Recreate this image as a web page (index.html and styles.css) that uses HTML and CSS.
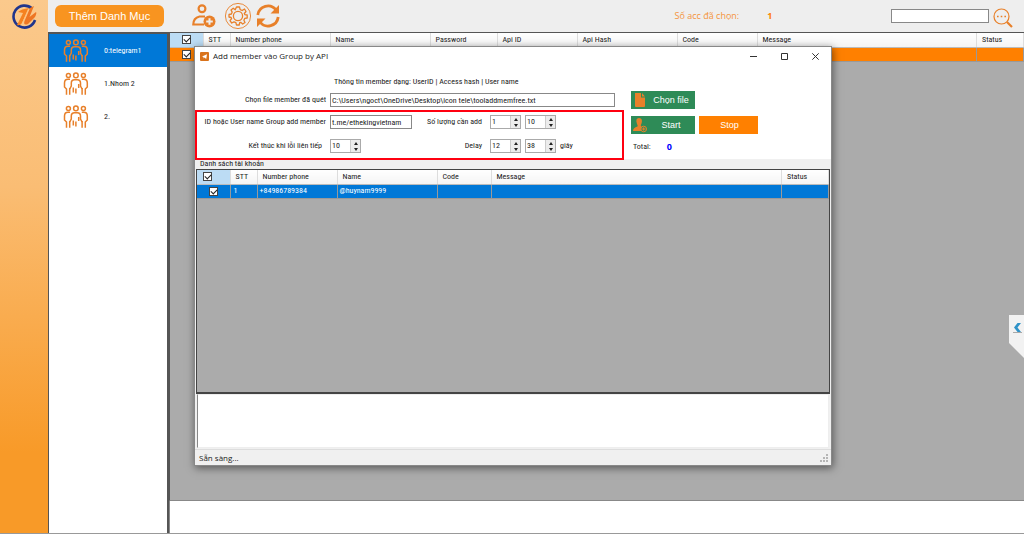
FILE: index.html
```html
<!DOCTYPE html>
<html lang="vi">
<head>
<meta charset="utf-8">
<title>Add member vào Group by API</title>
<link rel="stylesheet" href="styles.css">
</head>
<body>
<svg class="defs" aria-hidden="true">
  <symbol id="people" viewBox="0 0 25 24">
    <g fill="none" stroke="#e8802a" stroke-width="1.5">
      <circle cx="4.9" cy="3.4" r="2"/><circle cx="12.4" cy="3.4" r="2.3"/><circle cx="19.9" cy="3.4" r="2"/>
      <path d="M6.500 7.300H4.500Q1 7.300 1 11V15L3 17V22.800M6.200 16V22.800"/>
      <path d="M18.300 7.300H20.300Q23.800 7.300 23.800 11V15L21.800 17V22.800M18.600 16V22.800"/>
      <path d="M6.200 17L7.800 14V11Q7.800 7.700 11 7.700H13.800Q17 7.700 17 11V14L18.600 17"/>
      <path d="M9.800 15.500V20.500M12.400 16.500V21.500M15.200 12V16"/>
    </g>
  </symbol>
</svg>
<div class="app">
  <aside class="rail">
    <svg class="logo" viewBox="0 0 26 26" aria-hidden="true">
      <path d="M21 5.500A11 11 0 1 0 24 17" fill="none" stroke="#20358c" stroke-width="2.600"/>
      <path d="M7 9Q10 6 18 5L11 20Q9 23 6 22L12 10Z" fill="#f58220"/>
      <path d="M19 5L23 3L18.500 14L25 9Q26 10 24 14L17 21Q12 23 13.500 18Z" fill="#ee7623"/>
      <path d="M17.500 6L11.500 20" stroke="#ffc27d" stroke-width="1"/>
    </svg>
  </aside>
  <header class="topbar">
    <button class="add-category" type="button">Thêm Danh Mục</button>
    <div class="tools">
      <button class="icon-button" type="button" aria-label="Add user">
        <svg viewBox="0 0 24 24" width="24" height="24">
          <g fill="none" stroke="#e8802a" stroke-width="2.200"><circle cx="10" cy="4.800" r="3.400"/>
          <path d="M13 12.500H7.500Q1.300 14 1.300 20.500H12"/></g>
          <circle cx="17.500" cy="17.500" r="6" fill="#e8802a"/><path d="M17.500 14.200V20.800M14.200 17.500H20.800" stroke="#eee" stroke-width="2"/>
        </svg>
      </button>
      <button class="icon-button" type="button" aria-label="Settings">
        <svg viewBox="0 0 28 28" width="28" height="28" fill="none" stroke="#e8802a">
          <circle cx="14" cy="14" r="12.600" stroke-width=".9"/><circle cx="14" cy="14" r="4.600" stroke-width="1.300"/>
          <path stroke-width="1.300" stroke-linejoin="round" d="M12.500 5H15.500L16.200 7.600L18.200 8.500L20.500 7L22 9.500L20.300 11.500L20.900 12.700L23.200 13V16L20.700 16.400L19.900 18.200L21 20.500L18.700 22L16.700 20.300L15.700 20.700L15.200 23H12.500L11.900 20.600L10 19.800L7.700 21L6 18.700L7.600 16.600L7.100 15.500L5 15V12.500L7.400 12L8.200 10.100L7 7.900L9.200 6.200L11.200 7.800Z"/>
        </svg>
      </button>
      <button class="icon-button" type="button" aria-label="Refresh">
        <svg viewBox="0 0 24 24" width="24" height="24">
          <path d="M1.800 11A10.200 10.200 0 0 1 20 6M22.200 13A10.200 10.200 0 0 1 4 18" fill="none" stroke="#e8802a" stroke-width="2.800"/>
          <path d="M23 1V9.500H14.500ZM1 23V14.500H9.500Z" fill="#e8802a"/>
        </svg>
      </button>
    </div>
    <p class="selected"><span>Số acc đã chọn:</span><b>1</b></p>
    <form class="search">
      <input class="search-input" type="text" aria-label="Search">
      <button class="icon-button" type="button" aria-label="Search">
        <svg viewBox="0 0 20 20" width="20" height="20"><circle cx="8.500" cy="8.500" r="7.500" fill="none" stroke="#e8802a" stroke-width="1.200"/>
        <path d="M4 8.500H5.600M7.700 8.500H9.300M11.400 8.500H13" stroke="#e8802a" stroke-width="1.600"/><path d="M14 14L19 19" stroke="#e8802a" stroke-width="2.200"/></svg>
      </button>
    </form>
  </header>
  <nav class="groups">
    <a class="group active" href="#g0"><svg><use href="#people"/></svg><span>0:telegram1</span></a>
    <a class="group" href="#g1"><svg><use href="#people"/></svg><span>1.Nhom 2</span></a>
    <a class="group" href="#g2"><svg><use href="#people"/></svg><span>2.</span></a>
  </nav>
  <main class="workspace">
    <div class="accounts">
      <table class="grid">
        <colgroup><col class="w33"><col class="w27"><col class="w100"><col class="w100"><col class="w67"><col class="w80"><col class="w100"><col class="w80"><col><col class="w47"></colgroup>
        <thead><tr><th class="pick"><input type="checkbox" checked aria-label="Select all"></th><th>STT</th><th>Number phone</th><th>Name</th><th>Password</th><th>Api ID</th><th>Api Hash</th><th>Code</th><th>Message</th><th>Status</th></tr></thead>
        <tbody><tr class="orange"><td class="pick"><input type="checkbox" checked aria-label="Select row"></td><td></td><td></td><td></td><td></td><td></td><td></td><td></td><td></td><td></td></tr></tbody>
      </table>
    </div>
    <div class="log"></div>

    <section class="dialog" role="dialog" aria-labelledby="dialog-title">
      <header class="titlebar">
        <svg viewBox="0 0 9 9" width="9" height="9" aria-hidden="true"><rect width="9" height="9" rx="1" fill="#d9731c"/><path d="M2 4.500L7 2.200L6.200 7L4.500 5.500L3.500 6.500V5Z" fill="#fff"/></svg>
        <h1 id="dialog-title">Add member vào Group by API</h1>
        <button class="win" type="button" aria-label="Minimize"><svg viewBox="0 0 7 7"><path d="M0 3.500H7"/></svg></button>
        <button class="win" type="button" aria-label="Maximize"><svg viewBox="0 0 7 7"><path d="M.5 .5H6.500V6.500H.5Z"/></svg></button>
        <button class="win" type="button" aria-label="Close"><svg viewBox="0 0 7 7"><path d="M.3 .3L6.700 6.700M6.700 .3L.3 6.700"/></svg></button>
      </header>
      <form class="settings">
        <div class="fields">
          <p class="hint">Thông tin member dạng: UserID | Access hash | User name</p>
          <div class="file-row">
            <label for="file">Chọn file member đã quét</label>
            <input id="file" class="text" type="text" value="C:\Users\ngoct\OneDrive\Desktop\icon tele\tooladdmemfree.txt">
          </div>
          <div class="options">
            <label for="target">ID hoặc User name Group add member</label>
            <input id="target" class="text" type="text" value="t.me/ethekingvietnam">
            <label for="min-count">Số lượng cần add</label>
            <div class="spin"><input id="min-count" type="number" value="1"><button type="button" class="up" aria-label="Up"></button><button type="button" class="down" aria-label="Down"></button></div>
            <div class="spin"><input type="number" value="10" aria-label="Max"><button type="button" class="up" aria-label="Up"></button><button type="button" class="down" aria-label="Down"></button></div>
            <span></span>
            <label for="errors">Kết thúc khi lỗi liên tiếp</label>
            <div class="spin"><input id="errors" type="number" value="10"><button type="button" class="up" aria-label="Up"></button><button type="button" class="down" aria-label="Down"></button></div>
            <label for="delay">Delay</label>
            <div class="spin"><input id="delay" type="number" value="12"><button type="button" class="up" aria-label="Up"></button><button type="button" class="down" aria-label="Down"></button></div>
            <div class="spin"><input type="number" value="38" aria-label="Max delay"><button type="button" class="up" aria-label="Up"></button><button type="button" class="down" aria-label="Down"></button></div>
            <span>giây</span>
          </div>
        </div>
        <div class="actions">
          <button class="action green" type="button"><svg viewBox="0 0 14 16"><path d="M2 1H8V5.500H12V14Q12 15 11 15H3Q2 15 2 14ZM9 1L12 4.500H9Z" fill="#e8802a"/></svg><span>Chọn file</span></button>
          <div class="action-row">
            <button class="action green" type="button"><svg viewBox="0 0 14 16"><path d="M6 1C9 1 9.500 4 8.500 6.500Q7 8.500 8.500 9.500Q7.500 11 8 14H0Q0 10.500 4.500 9.500Q5 8.500 4 7Q2 1 6 1Z" fill="#e8802a"/><circle cx="10.700" cy="12" r="2.800" fill="none" stroke="#e8802a"/><path d="M9 12H12.400M10.700 10.300V13.700" stroke="#e8802a"/></svg><span>Start</span></button>
            <button class="action stop" type="button">Stop</button>
          </div>
          <p class="total"><span>Total:</span><b>0</b></p>
        </div>
      </form>
      <fieldset class="list">
        <legend>Danh sách tài khoản</legend>
        <div class="members">
          <table class="grid">
            <colgroup><col class="w33"><col class="w27"><col class="w80"><col class="w100"><col class="w54"><col><col class="w47"></colgroup>
            <thead><tr><th class="pick"><input type="checkbox" checked aria-label="Select all"></th><th>STT</th><th>Number phone</th><th>Name</th><th>Code</th><th>Message</th><th>Status</th></tr></thead>
            <tbody><tr class="blue"><td class="pick"><input type="checkbox" checked aria-label="Select row"></td><td>1</td><td>+84986789384</td><td>@huynam9999</td><td></td><td></td><td></td></tr></tbody>
          </table>
        </div>
      </fieldset>
      <textarea class="output" aria-label="Log"></textarea>
      <footer class="status"><span>Sẵn sàng...</span>
        <svg viewBox="0 0 8 8" width="8" height="8" fill="#b5b5b5"><path d="M6 0H8V2H6ZM3 3H5V5H3ZM6 3H8V5H6ZM0 6H2V8H0ZM3 6H5V8H3ZM6 6H8V8H6Z"/></svg>
      </footer>
    </section>

    <button class="drawer" type="button" aria-label="Open panel">
      <svg viewBox="0 0 15 43" width="15" height="43"><path d="M0 0H15V43L0 28Z" fill="#f2f2f2"/><path d="M8.500 8H12L8.500 12.500L12 17H8.500L5 12.500Z" fill="#2f93c8"/><path d="M4 17.500H13" stroke="#aaa"/></svg>
    </button>
  </main>
</div>
</body>
</html>
```
FILE: styles.css
```css
* { box-sizing: border-box; }
body {
  margin: 0;
  font: 8px/12px "Roboto Condensed", "Liberation Sans", sans-serif;
  color: #222;
}
p, h1 { margin: 0; }
button, input, textarea { font: inherit; color: inherit; margin: 0; }
button { border: 0; padding: 0; background: none; }
.defs { display: none; }

.app {
  display: grid;
  grid-template-columns: 48px 121px minmax(0, 1fr);
  grid-template-rows: 32px minmax(0, 1fr);
  height: 100vh;
  border-bottom: 1px solid #999;
  background: #eee;
}
.rail {
  grid-row: 1 / 3;
  background: linear-gradient(#fbc98c, #fabd74 35%, #f89a28 85%);
}
.logo { display: block; width: 26px; height: 26px; margin: 3px 0 0 11px; }

.topbar {
  grid-column: 2 / 4;
  display: flex;
  align-items: center;
  padding: 0 11px 0 7px;
}
.add-category {
  width: 109px;
  height: 22px;
  border-radius: 6px;
  background: #f89420;
  color: #fff;
  font: 11px/22px "Liberation Sans", sans-serif;
}
.tools { display: flex; align-items: center; gap: 8px; margin-left: 28px; }
.tools .icon-button:last-child { margin-left: -4px; }
.icon-button { display: flex; }
.selected {
  display: flex;
  gap: 28px;
  margin: 0 auto;
  padding-left: 276px;
  font: 9px/14px "Open Sans", sans-serif;
  color: #f5943b;
}
.selected b { color: #ff8000; }
.search { display: flex; align-items: center; gap: 4px; }
.search-input { width: 98px; height: 14px; border: 1px solid #888; background: #fff; }
.search .icon-button { padding-top: 4px; }

.groups { border: 1px solid #555; border-top: 2px solid #555; border-right-width: 2px; border-bottom: 0; background: #fff; }
.group {
  display: flex;
  align-items: center;
  gap: 15px;
  height: 33px;
  padding-left: 14px;
  color: #222;
  text-decoration: none;
}
.group svg { width: 26px; height: 24px; }
.group.active { background: #0078d7; color: #fff; }

.workspace {
  position: relative;
  display: grid;
  grid-template-rows: minmax(0, 1fr) 32px;
  border-top: 1px solid #555;
  overflow: hidden;
}
.accounts { background: #ababab; border-left: 1px solid #555; border-bottom: 1px solid #888; }
.log { background: #fff; border-left: 1px solid #888; }

.grid { width: 100%; table-layout: fixed; border-collapse: collapse; }
.grid th, .grid td {
  height: 14px;
  padding: 0 0 0 5px;
  line-height: 12px;
  text-align: left;
  font-weight: normal;
  white-space: nowrap;
}
.grid th { background: linear-gradient(#fff, #f4f4f4); border-right: 1px solid #ddd; border-bottom: 1px solid #bbb; }
.grid td { border-right: 1px solid #999; border-bottom: 1px solid #999; }
.grid td:nth-child(2) { padding-left: 3px; }
.grid td:nth-child(n + 3) { padding-left: 2px; }
.grid .pick { padding: 0; text-align: center; }
.grid th.pick { background: #bcdcf4; }
.w27 { width: 27px; }
.w33 { width: 33px; }
.w47 { width: 47px; }
.w54 { width: 54px; }
.w67 { width: 67px; }
.w80 { width: 80px; }
.w100 { width: 100px; }
.orange { background: #ff8000; }
.blue { background: #0078d7; color: #fff; }
.grid input {
  appearance: none;
  display: block;
  width: 9px;
  height: 9px;
  margin: 0 auto;
  border: 1px solid #444;
  background: #fff;
}
.members th input { margin-left: 6px; }
.grid input:checked::after {
  content: "";
  display: block;
  width: 5px;
  height: 3px;
  margin: 1px;
  border: solid #222;
  border-width: 0 0 1px 1px;
  transform: rotate(-45deg);
}

.dialog {
  position: absolute;
  inset: 13px 192px 67px 25px;
  display: flex;
  flex-direction: column;
  border: 1px solid #888;
  background: #f0f0f0;
  box-shadow: 1px 2px 8px rgba(0, 0, 0, .5);
}
.titlebar { display: flex; align-items: center; height: 18px; padding: 0 12px 0 5px; background: #fff; }
.titlebar h1 { flex: 1; margin-left: 4px; font: 8px/16px "Open Sans", sans-serif; }
.win { width: 7px; height: 7px; margin-left: 24px; }
.win svg { display: block; width: 7px; height: 7px; fill: none; stroke: #333; stroke-width: 1; }

.settings { display: flex; height: 94px; background: #fff; }
.fields { width: 429px; }
.hint { margin: 11px 0 5px 139px; }
.file-row { display: grid; grid-template-columns: 131px 285px; gap: 4px; align-items: center; }
label { text-align: right; white-space: nowrap; }
.text { width: 100%; height: 14px; padding: 0 1px; border: 1px solid #888; background: #fff; }
.options {
  display: grid;
  grid-template-columns: 129px 82px 70px 31px 31px auto;
  grid-template-rows: 14px 14px;
  column-gap: 4px;
  row-gap: 10px;
  align-items: center;
  height: 50px;
  margin-top: 3px;
  padding-top: 3px;
  border: 2px solid #ff0010;
}
.options label:nth-of-type(n + 2) { padding-right: 4px; }
.spin {
  display: grid;
  grid-template-columns: 19px 10px;
  grid-template-rows: 6px 6px;
  width: 31px;
  border: 1px solid #aaa;
  background: #fff;
}
.spin input {
  grid-row: 1 / 3;
  width: 100%;
  padding: 0 0 0 1px;
  border: 0;
  appearance: textfield;
  background: none;
}
.spin input::-webkit-inner-spin-button { appearance: none; margin: 0; }
.spin button { display: grid; place-items: center; background: #ececec; border-left: 1px solid #ccc; }
.spin button::before { content: ""; border: solid transparent; border-width: 0 2px; }
.spin .up::before { border-bottom: 3px solid #222; }
.spin .down::before { border-top: 3px solid #222; }

.actions { display: flex; flex-direction: column; align-items: flex-start; gap: 7px; padding: 26px 0 0 7px; }
.action-row { display: flex; gap: 4px; }
.action {
  display: flex;
  align-items: center;
  width: 64px;
  height: 18px;
  padding-left: 2px;
  color: #fff;
  font: 9px/18px "Liberation Sans", sans-serif;
}
.action svg { width: 14px; height: 16px; }
.action span { flex: 1; text-align: center; }
.green { background: #2e8b57; }
.stop { width: 59px; justify-content: center; background: #ff8000; }
.total { display: flex; gap: 16px; padding-left: 2px; }
.total b { color: #00f; font-size: 9px; font-family: "Open Sans", sans-serif; }

.list {
  display: flex;
  flex: 1;
  min-height: 0;
  min-width: 0;
  margin: 0;
  padding: 0 1px;
  border: 0;
}
.list legend { padding: 0 4px; line-height: 10px; }
.members { width: 100%; height: 100%; background: #ababab; border: 1px solid #444; border-bottom-width: 2px; }
.output { flex: none; height: 54px; margin: 0 2px 1px; border: 1px solid #eee; border-left: 1px solid #888; background: #fff; resize: none; }
.status { display: flex; flex: none; justify-content: space-between; align-items: center; height: 16px; padding: 0 3px 0 4px; border-top: 1px solid #ddd; font-family: "Open Sans", sans-serif; }

.drawer { position: absolute; top: 282px; right: 0; }
.drawer svg { display: block; }
```
